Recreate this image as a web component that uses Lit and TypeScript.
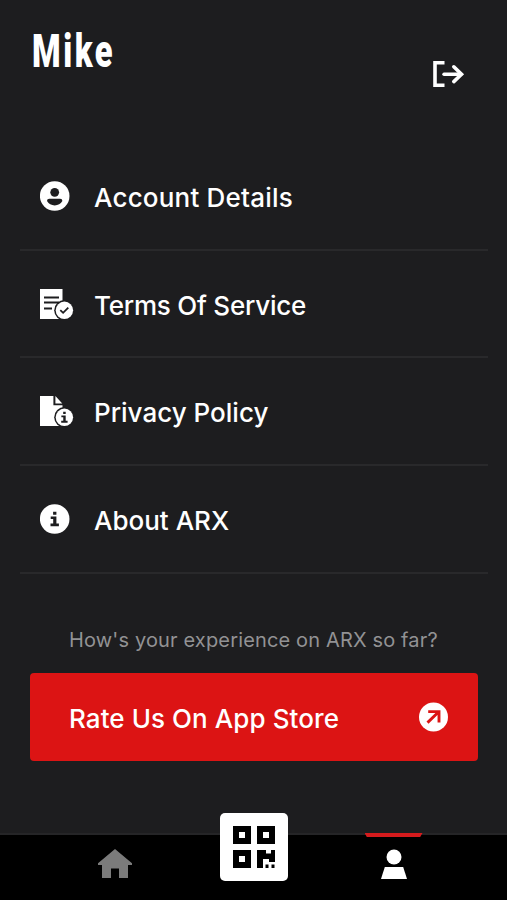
import { LitElement, html, svg, css } from "lit";
import { customElement } from "lit/decorators.js";

const info = svg`<path d="M-4 -2.5H1.7V4.6H4.2V7.2H-4.2V4.6H-1.5V0H-4ZM-1.6 -7.2H1.7V-4.2H-1.6Z"/>`;

const icons = {
  account: html`<svg width="34" height="32" viewBox="0 0 34 32">
    <circle cx="14.7" cy="16" r="14.8" fill="#fff"/>
    <g fill="#1d1d1f"><circle cx="14.7" cy="12.3" r="4.4"/>
    <path d="M7 21.1Q7 18.8 9.3 18.8H20.1Q22.4 18.8 22.4 21.1Q19.7 25.4 14.7 25.4Q9.7 25.4 7 21.1Z"/></g></svg>`,
  terms: html`<svg width="34" height="32" viewBox="0 0 34 32">
    <path d="M0 1H22.5V31H0Z" fill="#fff"/>
    <path d="M4 9.4H19M4 14.6H19M4 20.4H12" stroke="#1d1d1f" stroke-width="2"/>
    <circle cx="24.4" cy="22.3" r="10.2" fill="#1d1d1f"/><circle cx="24.4" cy="22.3" r="8.7" fill="#fff"/>
    <path d="M20.3 22.1L23.1 24.8L28.3 19.6" fill="none" stroke="#1d1d1f" stroke-width="1.8"/></svg>`,
  privacy: html`<svg width="34" height="32" viewBox="0 0 34 32">
    <path d="M0 1H13.4V10.2H22.5V31H0ZM15.4 1L22.3 8.4H15.4Z" fill="#fff"/>
    <circle cx="24.4" cy="22.3" r="10.2" fill="#1d1d1f"/><circle cx="24.4" cy="22.3" r="8.7" fill="#fff"/>
    <g transform="translate(24.4 22.3) scale(.76)" fill="#1d1d1f">${info}</g></svg>`,
  about: html`<svg width="34" height="32" viewBox="0 0 34 32">
    <circle cx="14.7" cy="16" r="14.8" fill="#fff"/><g transform="translate(14.7 16)" fill="#1d1d1f">${info}</g></svg>`,
};

const rows = [
  { icon: icons.account, label: "Account Details", cls: "account" },
  { icon: icons.terms, label: "Terms Of Service", cls: "terms" },
  { icon: icons.privacy, label: "Privacy Policy", cls: "privacy" },
  { icon: icons.about, label: "About ARX", cls: "about" },
];

@customElement("app-root")
export class AppRoot extends LitElement {
  static styles = css`
    :host { display: flex; flex-direction: column; height: 900px; box-sizing: border-box; overflow: hidden;
      background: #1d1d1f; color: #fff; font-family: Inter, "Liberation Sans", sans-serif; }
    svg { display: block; flex: none; }
    header { display: flex; justify-content: space-between; height: 143px; padding: 24px 42px 0 32px; box-sizing: border-box; flex: none; }
    h1 { margin: 0; font: 900 46px/54px Roboto, sans-serif; letter-spacing: 3.6px; transform: scaleX(.71); transform-origin: 0 0; white-space: nowrap; }
    .logout { margin-top: 36px; }
    .list { margin: 0 19px 0 20px; flex: none; }
    .row { display: flex; align-items: center; height: 107.7px; box-sizing: border-box; padding-left: 20px; gap: 20px; border-bottom: 2px solid #29292b; }
    .label { font-size: 26px; line-height: 32px; font-weight: 500; white-space: nowrap; padding-top: 4px; }
    .account { letter-spacing: .2px; }
    .terms { letter-spacing: -.22px; }
    .store { letter-spacing: .08px; }
    .ask { margin: 54px 0 0 69px; font-size: 20px; line-height: 25px; color: #929294; letter-spacing: .15px; white-space: nowrap; }
    .rate { display: flex; align-items: center; justify-content: space-between; margin: 20px 29px 0 30px; height: 88px; box-sizing: border-box;
      padding: 0 30px 0 39px; border-radius: 4px; background: #dc1414; flex: none; }
    nav { margin-top: auto; height: 67px; box-sizing: border-box; border-top: 2px solid #252527; background: #000;
      display: grid; grid-template-columns: 220px 68px 219px; flex: none; }
    .tab { display: flex; flex-direction: column; align-items: center; }
    .home { padding: 13px 0 0 9px; }
    .scan { margin-top: -22px; width: 68px; height: 68px; border-radius: 5px; background: #fff; display: grid; place-items: center; }
    .me { padding-right: 8px; margin-top: -2px; }
    .marker { width: 58px; height: 4px; background: #d51b1d; clip-path: polygon(0 0, 100% 0, 96% 100%, 4% 100%); }
    .person { margin-top: 11px; }
  `;

  render() {
    return html`
      <header>
        <h1>Mike</h1>
        <svg class="logout" width="32" height="28" viewBox="0 0 32 28" fill="none" stroke="#fff">
          <path d="M11.5 2.8H2V25.2H11.5" stroke-width="3.6"/>
          <path d="M11 14.2H28" stroke-width="3.4" stroke-linecap="round"/>
          <path d="M20.8 6.8L28.5 14.2L20.8 21.6" stroke-width="3.6" stroke-linecap="round"/>
        </svg>
      </header>
      <div class="list">
        ${rows.map((r) => html`<div class="row">${r.icon}<span class="label ${r.cls}">${r.label}</span></div>`)}
      </div>
      <div class="ask">How's your experience on ARX so far?</div>
      <div class="rate">
        <span class="label store">Rate Us On App Store</span>
        <svg width="29" height="30" viewBox="0 0 29 30"><circle cx="14.5" cy="15" r="14.5" fill="#fff"/>
          <path d="M8.5 20.6L19.5 10M9.2 9.6H20V20.5" fill="none" stroke="#dc1414" stroke-width="2.9"/></svg>
      </div>
      <nav>
        <div class="tab home"><svg width="34" height="31" viewBox="0 0 34 31">
          <path d="M17 1L34 15.3V17H30V30H21V20.5H13V30H4V17H0V15.3Z" fill="#7b7b7b"/></svg></div>
        <div class="scan"><svg width="42" height="42" viewBox="0 0 42 42" fill-rule="evenodd">
          <path d="M0 0H18V18H0ZM6 6V12H12V6ZM24 0H42V18H24ZM30 6V12H36V6ZM0 24H18V42H0ZM6 30V36H12V30Z"/>
          <path d="M24 24H33V27.5H38V24H42V36H36V33H30V42H24ZM32.5 38.5H35.5V42H32.5ZM38.5 38.5H41.5V42H38.5Z"/></svg></div>
        <div class="tab me"><div class="marker"></div>
          <svg class="person" width="26" height="32" viewBox="0 0 26 32" fill="#fff">
            <circle cx="13" cy="9" r="7.5"/><path d="M3.8 19H22.2L26 31H0Z"/></svg></div>
      </nav>`;
  }
}
